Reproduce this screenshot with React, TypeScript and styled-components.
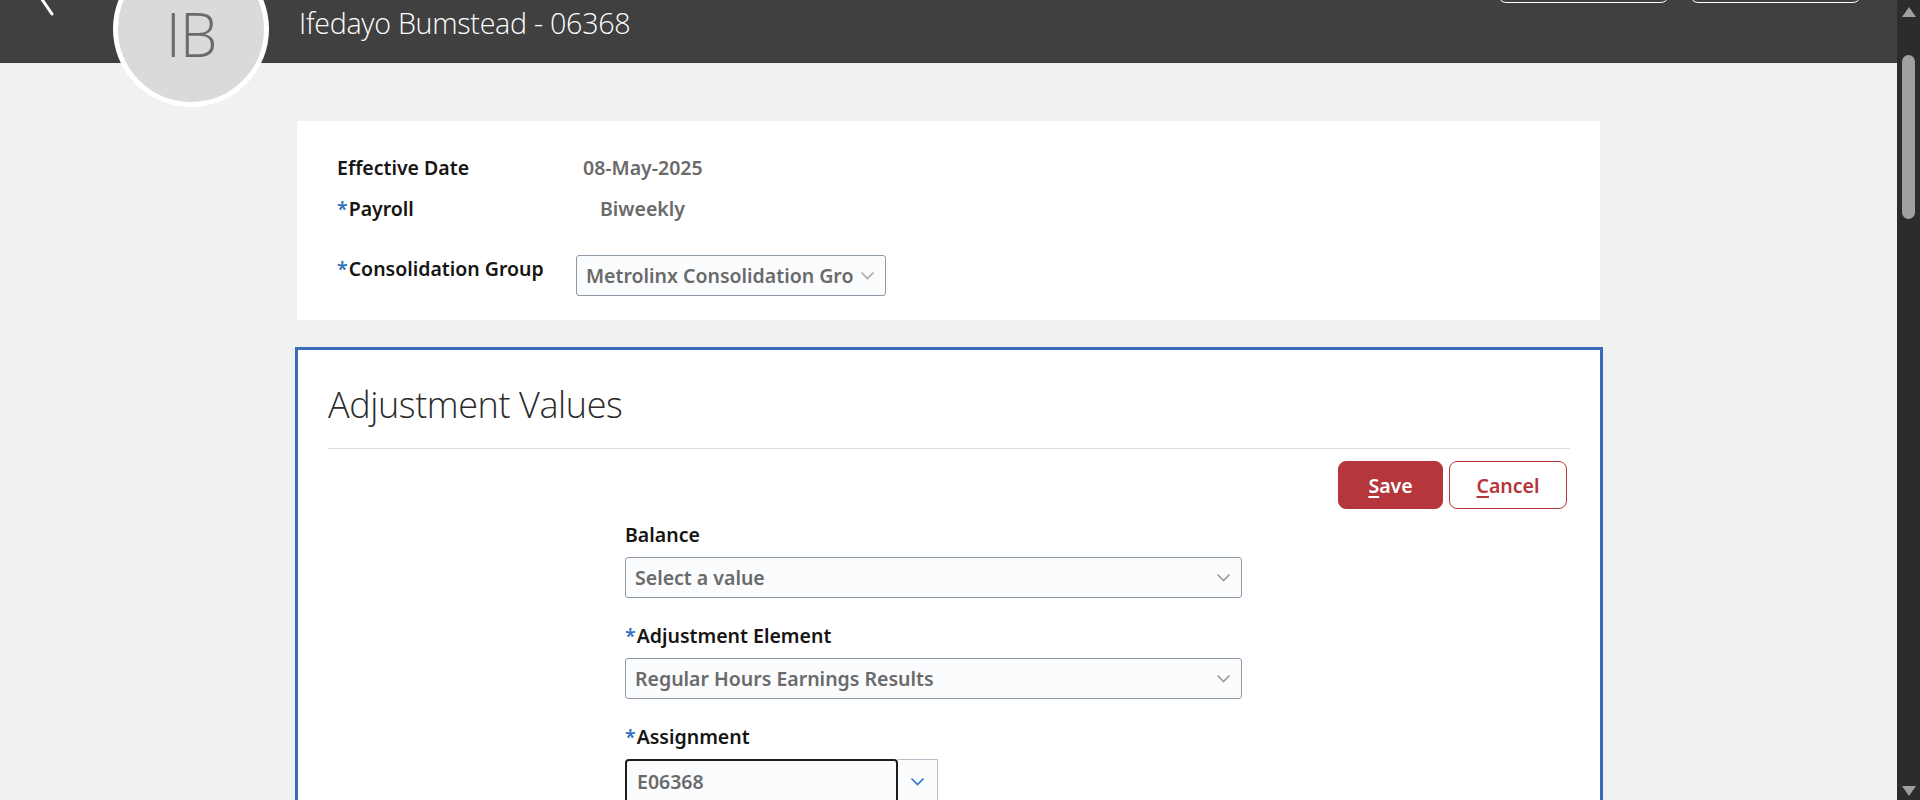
import React from 'react'
import styled, { createGlobalStyle } from 'styled-components'

const GlobalStyle = createGlobalStyle`
  html, body {
    margin: 0;
    padding: 0;
    height: 100%;
    overflow: hidden;
    background: #f1f1f1;
    font-family: "Noto Sans", "Open Sans", Arial, sans-serif;
  }
  #root {
    height: 100%;
  }
`

const Page = styled.div`
  display: flex;
  height: 800px;
  width: 1920px;
`

const Main = styled.div`
  flex: 1;
  display: flex;
  flex-flow: column;
  overflow: hidden;
`

const Header = styled.header`
  position: relative;
  height: 63px;
  flex-shrink: 0;
  background: #404040;
  display: flex;
  align-items: flex-start;
`

const BackArrow = styled.svg`
  margin: -30px 0 0 30px;
  width: 30px;
  height: 48px;
  flex-shrink: 0;
`

const Avatar = styled.div`
  position: absolute;
  left: 113px;
  top: -49px;
  width: 146px;
  height: 146px;
  border-radius: 50%;
  border: 5px solid #fff;
  background: #dadada;
  display: flex;
  align-items: center;
  justify-content: center;
  z-index: 2;
`

const Initials = styled.span`
  font-family: "Open Sans", sans-serif;
  font-weight: 300;
  font-size: 60px;
  color: #6b6b6b;
  margin-top: 10px;
  line-height: 0.8;
  letter-spacing: -1px;
`

const PersonName = styled.h1`
  margin: 5px 0 0 239px;
  font-family: "Open Sans", sans-serif;
  font-weight: 300;
  font-size: 28.7px;
  line-height: 36px;
  color: #fff;
  letter-spacing: -0.3px;
`

const HeaderActions = styled.div`
  margin-left: auto;
  margin-right: 36px;
  display: flex;
  gap: 21px;
`

const GhostButton = styled.button`
  width: 171px;
  height: 40px;
  margin-top: -37px;
  background: transparent;
  border: 1px solid #fff;
  border-radius: 8px;
`

const Content = styled.div`
  padding: 58px 0 0 295px;
  width: 1308px;
  display: flex;
  flex-flow: column;
`

const SummaryCard = styled.section`
  margin: 0 3px 0 2px;
  background: #fff;
  padding: 35px 40px 24px;
  display: flex;
  flex-flow: column;
`

const SummaryRow = styled.div<{ $gap?: number }>`
  display: flex;
  align-items: flex-start;
  margin-top: ${({ $gap }) => $gap ?? 0}px;
`

const SummaryLabel = styled.div<{ $offset?: number }>`
  width: 239px;
  flex-shrink: 0;
  font-size: 19.5px;
  font-weight: 600;
  line-height: 24px;
  color: #161513;
  margin-top: ${({ $offset }) => $offset ?? 0}px;
`

const Required = styled.span`
  color: #2f6fbf;
  font-weight: 600;
  margin-right: 1px;
`

const ReadOnlyValue = styled.div<{ $indent: number }>`
  padding-left: ${({ $indent }) => $indent}px;
  font-size: 19.5px;
  font-weight: 600;
  line-height: 24px;
  color: #6a6a6a;
`

const SelectBox = styled.div<{ $width: number }>`
  width: ${({ $width }) => $width}px;
  height: 41px;
  box-sizing: border-box;
  border: 1px solid #8d99a5;
  border-radius: 3px;
  background: #fbfcfd;
  display: flex;
  align-items: center;
  padding: 0 10px 0 9px;
  gap: 6px;
  overflow: hidden;
`

const SelectText = styled.span`
  flex: 1;
  white-space: nowrap;
  overflow: hidden;
  font-size: 19.5px;
  font-weight: 600;
  color: #6a6a6a;
`

const ChevronIcon = styled.svg<{ $color?: string }>`
  width: 15px;
  height: 9px;
  flex-shrink: 0;
  stroke: ${({ $color }) => $color ?? '#9a9a9a'};
`

const AdjustPanel = styled.section`
  margin-top: 27px;
  border: 3px solid #3a6cb6;
  border-bottom: none;
  background: #fff;
  padding: 0 30px;
  flex: 1;
`

const PanelTitle = styled.h2`
  margin: 0;
  padding: 31px 0 19px;
  font-family: "Open Sans", sans-serif;
  font-weight: 300;
  font-size: 36px;
  line-height: 48px;
  color: #2b2b2b;
  letter-spacing: -0.4px;
  border-bottom: 1px solid #d6dee6;
`

const Toolbar = styled.div`
  display: flex;
  justify-content: flex-end;
  gap: 6px;
  padding: 12px 3px 0 0;
`

const ActionButton = styled.button<{ $primary?: boolean; $width: number }>`
  width: ${({ $width }) => $width}px;
  height: 48px;
  border-radius: 8px;
  font-family: inherit;
  font-size: 19.5px;
  font-weight: 600;
  cursor: pointer;
  background: ${({ $primary }) => ($primary ? '#b5363b' : '#fff')};
  color: ${({ $primary }) => ($primary ? '#fff' : '#b5363b')};
  border: 1px solid #b5363b;
  u {
    text-decoration-thickness: 2px;
    text-underline-offset: 3px;
  }
`

const FormColumn = styled.div`
  margin: 14px 0 0 297px;
  display: flex;
  flex-flow: column;
`

const FieldLabel = styled.label`
  font-size: 19.5px;
  font-weight: 600;
  line-height: 24px;
  color: #161513;
  margin-bottom: 10px;
`

const Field = styled.div`
  display: flex;
  flex-flow: column;
  margin-bottom: 26px;
`

const ComboRow = styled.div`
  display: flex;
`

const ComboInput = styled.div`
  width: 273px;
  height: 44px;
  box-sizing: border-box;
  border: 2px solid #1e1e1e;
  border-radius: 4px;
  background: #fbfcfe;
  display: flex;
  align-items: center;
  padding-left: 10px;
  font-size: 19.5px;
  font-weight: 600;
  color: #6a6a6a;
`

const ComboButton = styled.div`
  width: 40px;
  height: 44px;
  box-sizing: border-box;
  border: 1px solid #b5c0cb;
  border-left: none;
  background: #fbfcfe;
  display: flex;
  align-items: center;
  justify-content: center;
`

const ScrollTrack = styled.div`
  width: 23px;
  flex-shrink: 0;
  background: #2c2c2c;
  display: flex;
  flex-flow: column;
  align-items: center;
  padding: 7px 0 4px;
  box-sizing: border-box;
`

const ScrollThumb = styled.div`
  width: 13px;
  height: 164px;
  border-radius: 7px;
  background: #a0a0a0;
  margin-top: 38px;
`

const ScrollArrow = styled.svg`
  width: 14px;
  height: 10px;
  fill: #a0a0a0;
`

const Chevron = ({ color }: { color?: string }) => (
  <ChevronIcon $color={color} viewBox="0 0 15 9" fill="none" strokeWidth="1.6">
    <path d="M1.5 1.5 L7.5 7.5 L13.5 1.5" />
  </ChevronIcon>
)

export default function App() {
  return (
    <>
      <GlobalStyle />
      <Page>
        <Main>
          <Header>
            <BackArrow viewBox="0 0 30 48">
              <path d="M24 1 L7 22 L22 44" stroke="#fff" strokeWidth="3" fill="none" strokeLinecap="round" />
            </BackArrow>
            <Avatar>
              <Initials>IB</Initials>
            </Avatar>
            <PersonName>Ifedayo Bumstead - 06368</PersonName>
            <HeaderActions>
              <GhostButton />
              <GhostButton />
            </HeaderActions>
          </Header>

          <Content>
            <SummaryCard>
              <SummaryRow>
                <SummaryLabel>Effective Date</SummaryLabel>
                <ReadOnlyValue $indent={7}>08-May-2025</ReadOnlyValue>
              </SummaryRow>
              <SummaryRow $gap={17}>
                <SummaryLabel><Required>*</Required>Payroll</SummaryLabel>
                <ReadOnlyValue $indent={24}>Biweekly</ReadOnlyValue>
              </SummaryRow>
              <SummaryRow $gap={34}>
                <SummaryLabel $offset={2}><Required>*</Required>Consolidation Group</SummaryLabel>
                <SelectBox $width={310}>
                  <SelectText>Metrolinx Consolidation Group</SelectText>
                  <Chevron color="#a8a8a8" />
                </SelectBox>
              </SummaryRow>
            </SummaryCard>

            <AdjustPanel>
              <PanelTitle>Adjustment Values</PanelTitle>
              <Toolbar>
                <ActionButton $primary $width={105}><u>S</u>ave</ActionButton>
                <ActionButton $width={118}><u>C</u>ancel</ActionButton>
              </Toolbar>
              <FormColumn>
                <Field>
                  <FieldLabel>Balance</FieldLabel>
                  <SelectBox $width={617}>
                    <SelectText>Select a value</SelectText>
                    <Chevron />
                  </SelectBox>
                </Field>
                <Field>
                  <FieldLabel><Required>*</Required>Adjustment Element</FieldLabel>
                  <SelectBox $width={617}>
                    <SelectText>Regular Hours Earnings Results</SelectText>
                    <Chevron />
                  </SelectBox>
                </Field>
                <Field>
                  <FieldLabel><Required>*</Required>Assignment</FieldLabel>
                  <ComboRow>
                    <ComboInput>E06368</ComboInput>
                    <ComboButton>
                      <Chevron color="#2a72c8" />
                    </ComboButton>
                  </ComboRow>
                </Field>
              </FormColumn>
            </AdjustPanel>
          </Content>
        </Main>
        <ScrollTrack>
          <ScrollArrow viewBox="0 0 14 10"><path d="M7 0 L14 10 L0 10 Z" /></ScrollArrow>
          <ScrollThumb />
          <div style={{ flex: 1 }} />
          <ScrollArrow viewBox="0 0 14 10"><path d="M0 0 L14 0 L7 10 Z" /></ScrollArrow>
        </ScrollTrack>
      </Page>
    </>
  )
}
